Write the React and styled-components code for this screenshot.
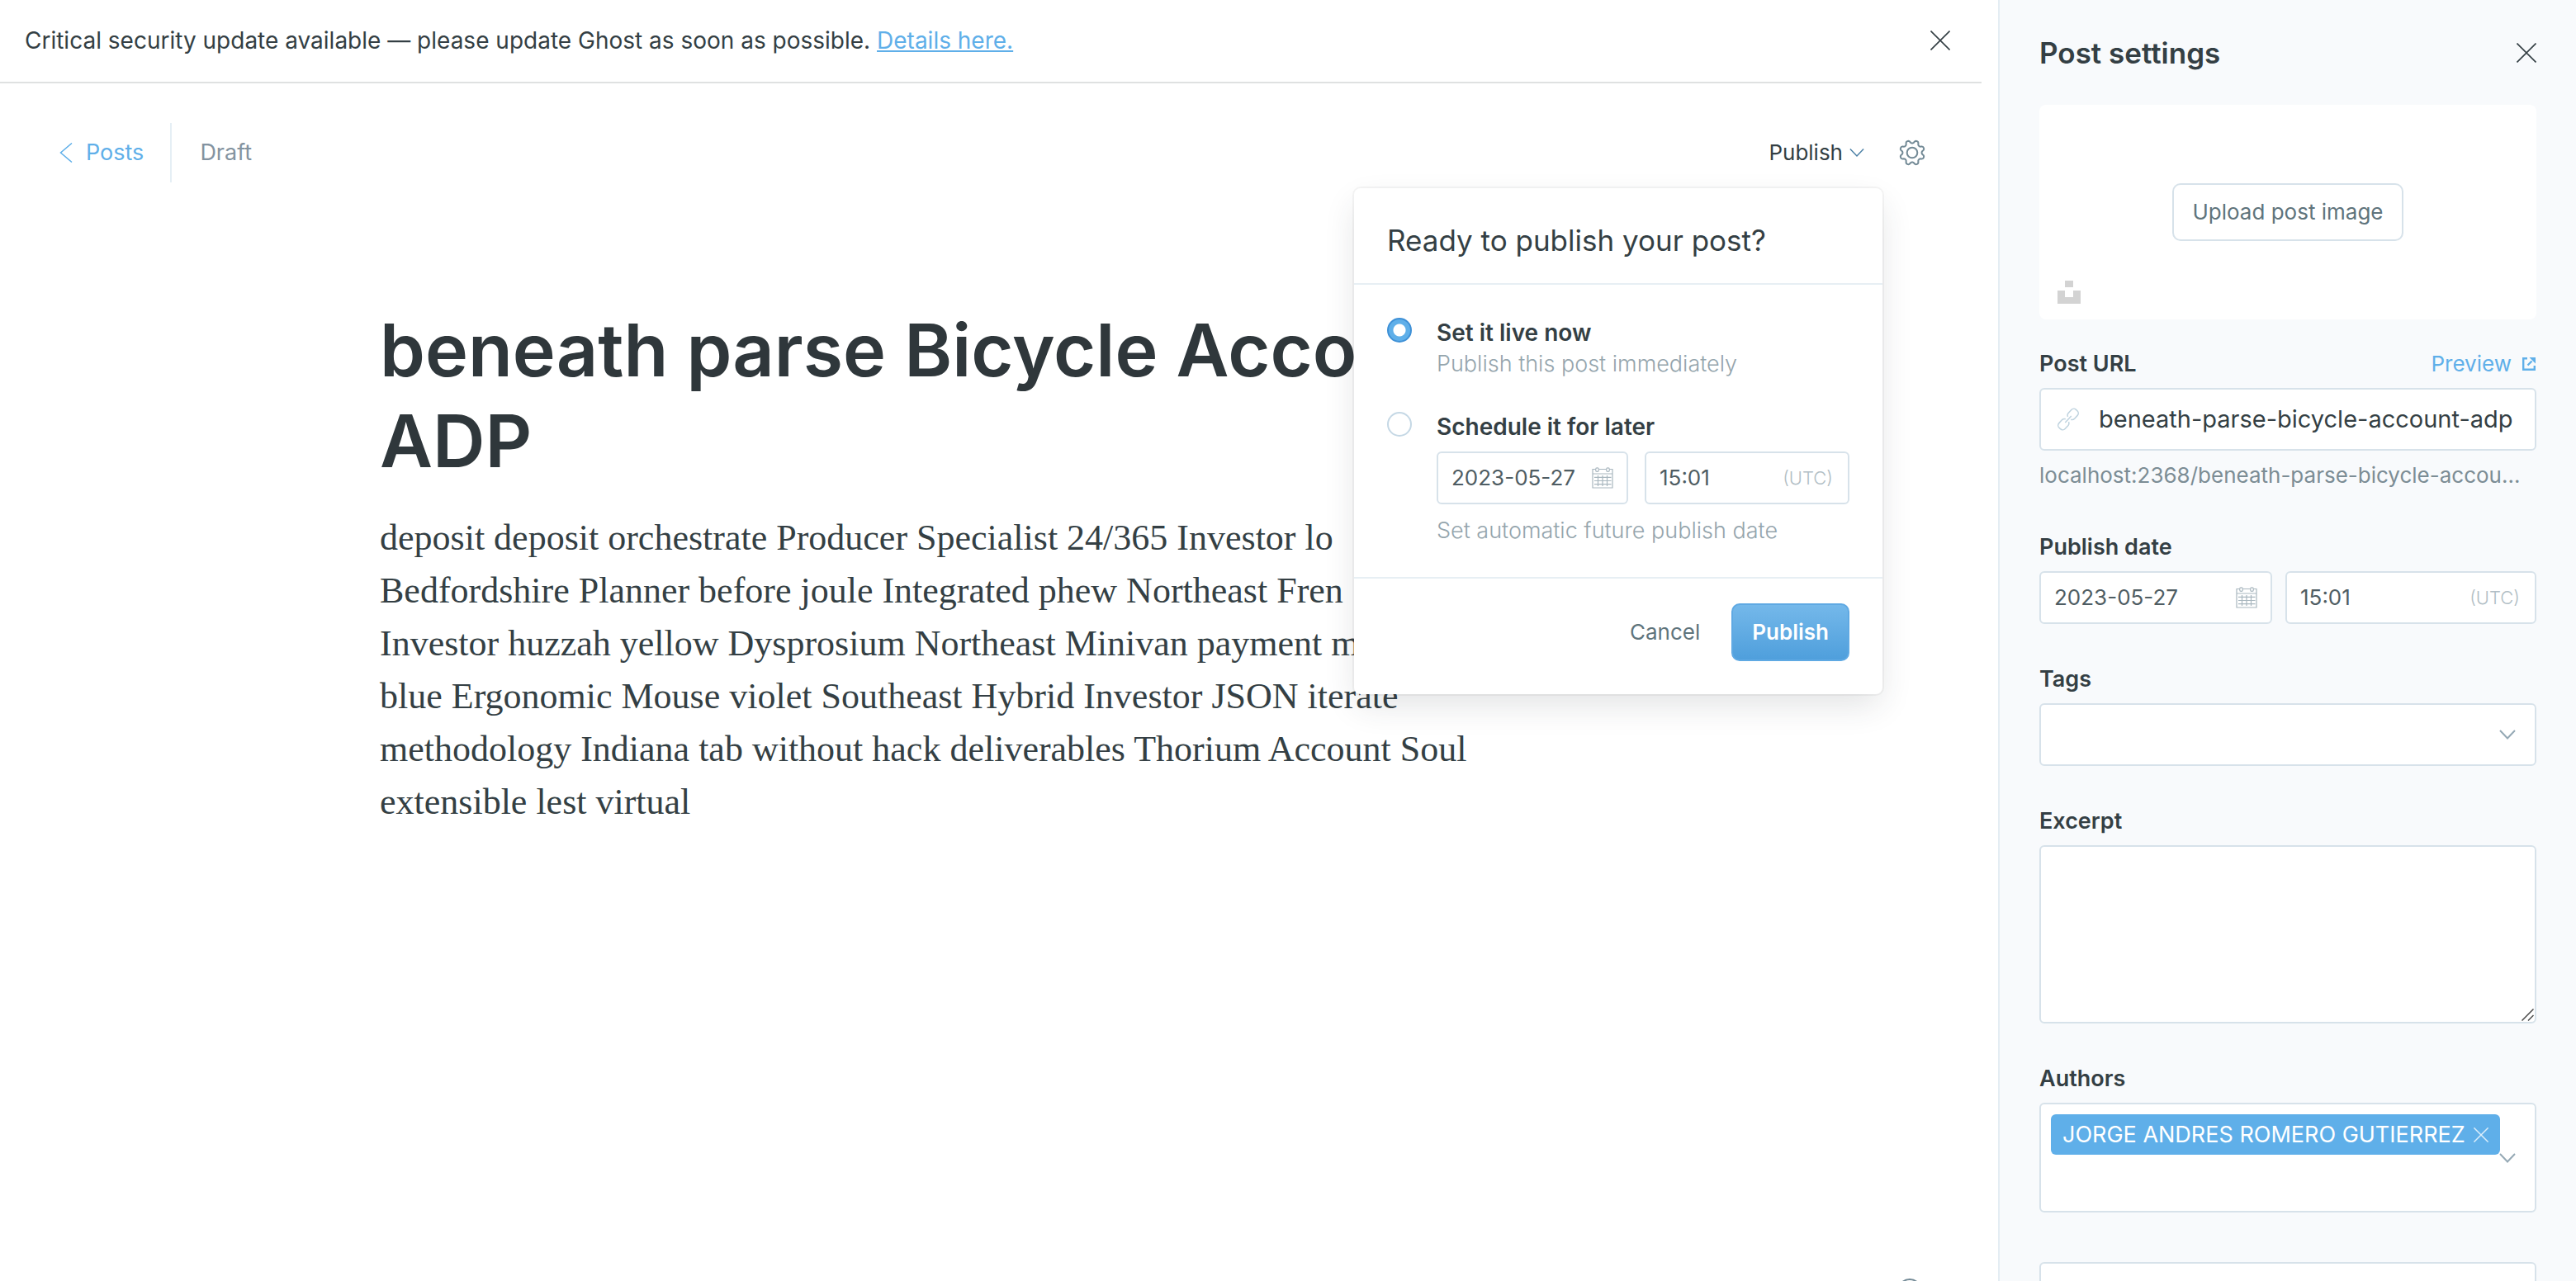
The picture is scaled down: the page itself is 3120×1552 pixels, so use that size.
import React from "react";
import styled, { createGlobalStyle, css } from "styled-components";

const ink = "#343f44";
const slate = "#5f747c";
const mist = "#95a5ad";
const line = "#d7e2ea";
const sky = "#5fafe9";

const GlobalStyle = createGlobalStyle`
  *, *::before, *::after { box-sizing: border-box; }
  body {
    margin: 0;
    background: #fff;
    color: ${ink};
    font-family: Inter, "Liberation Sans", sans-serif;
    font-size: 28px;
    line-height: 36px;
  }
  h1, h2, h3, p { margin: 0; }
  button, input, select, textarea { font: inherit; color: inherit; margin: 0; }
  button { border: 0; background: none; padding: 0; cursor: pointer; }
  svg { display: block; flex: none; }
`;

const Page = styled.div`
  display: flex;
  height: 100vh;
  overflow: hidden;
`;

const Main = styled.main`
  flex: 1;
  min-width: 0;
  padding-right: 20px;
  position: relative;
`;

const Alert = styled.aside`
  display: flex;
  align-items: center;
  justify-content: space-between;
  height: 101px;
  padding: 0 38px 2px 30px;
  border-bottom: 2px solid #dfe1e1;
`;

const AlertLink = styled.a`
  color: ${sky};
  text-decoration: underline;
`;

const EditorBar = styled.header`
  display: flex;
  align-items: center;
  padding: 48px 68px 48px 72px;
  font-size: 27px;
`;

const BackLink = styled.a`
  display: flex;
  align-items: center;
  gap: 16px;
  height: 72px;
  padding-right: 32px;
  border-right: 2px solid #e5eff5;
  color: ${sky};
  text-decoration: none;
`;

const Status = styled.span`
  flex: 1;
  padding-left: 34px;
  color: #8393a0;
`;

const PublishMenu = styled.div`
  position: relative;
  margin-right: 42px;
`;

const PublishTrigger = styled.button`
  display: flex;
  align-items: center;
  gap: 8px;
  font-size: 26px;
`;

const Popover = styled.form`
  position: absolute;
  z-index: 2;
  top: 61px;
  right: -22px;
  width: 640px;
  background: #fff;
  border-radius: 8px;
  box-shadow: 0 0 0 2px rgba(0, 0, 0, 0.04), 0 16px 40px -4px rgba(40, 50, 60, 0.14);
`;

const PopoverTitle = styled.h3`
  padding: 43px 40px 32px;
  border-bottom: 2px solid #e7eff4;
  font-size: 35px;
  font-weight: 400;
  line-height: 40px;
`;

const Choices = styled.div`
  display: flex;
  flex-direction: column;
  gap: 38px;
  padding: 40px 40px 36px;
  border-bottom: 2px solid #e7eff4;
`;

const Choice = styled.div`
  display: grid;
  grid-template-columns: 30px 1fr;
  column-gap: 30px;
  font-size: 28px;
`;

const Radio = styled.input`
  appearance: none;
  width: 30px;
  height: 30px;
  border: 2px solid #c5d8e5;
  border-radius: 50%;
  background: #fff;
  &:checked {
    border-color: #3e90d6;
    background: radial-gradient(circle, #fff 7px, #5fafe9 8px);
  }
`;

const ChoiceBody = styled.div`
  display: flex;
  flex-direction: column;
`;

const ChoiceLabel = styled.label`
  font-weight: 600;
  line-height: 36px;
`;

const Note = styled.p`
  color: ${mist};
  font-size: 27px;
  line-height: 40px;
  font-weight: 300;
`;

const DateRow = styled.div`
  display: grid;
  grid-template-columns: ${(p) => (p.$compact ? "232fr 248fr" : "282fr 304fr")};
  gap: ${(p) => (p.$compact ? 20 : 16)}px;
  margin: ${(p) => (p.$compact ? "12px 0" : "0")};
`;

const frame = css`
  border: 2px solid ${line};
  border-radius: 6px;
  background: #fff;
`;

const Box = styled.div`
  ${frame}
  display: flex;
  align-items: center;
  min-width: 0;
  height: ${(p) => p.$height || 64}px;
  padding: 0 16px;
  color: ${(p) => (p.$height ? ink : "#4f5d63")};
`;

const BoxInput = styled.input`
  flex: 1;
  min-width: 0;
  width: 100%;
  padding: 0;
  border: 0;
  outline: 0;
  background: transparent;
  font-size: ${(p) => (p.$large ? 29 : 26)}px;
  line-height: 36px;
`;

const Zone = styled.span`
  color: #b1bec5;
  font-size: 22px;
  font-weight: 300;
  padding-right: 2px;
`;

const Actions = styled.div`
  display: flex;
  justify-content: flex-end;
  gap: 38px;
  padding: 30px 40px 40px;
`;

const CancelButton = styled.button`
  color: ${slate};
  font-size: 26px;
`;

const PrimaryButton = styled.button`
  height: 70px;
  padding: 0 23px;
  border: 2px solid #5fa9e3;
  border-radius: 10px;
  background: linear-gradient(#74b8ea, #4f9fdc);
  color: #fff;
  font-size: 26px;
  font-weight: 600;
`;

const Article = styled.article`
  max-width: 1480px;
  margin: 0 auto;
  padding-top: 100px;
`;

const Headline = styled.h1`
  color: #2f373b;
  font-size: 88px;
  font-weight: 600;
  line-height: 110px;
  white-space: pre-line;
`;

const Prose = styled.p`
  margin-top: 31px;
  font-family: "Liberation Serif", "Times New Roman", serif;
  font-size: 44px;
  line-height: 64px;
  white-space: pre-line;
`;

const Help = styled.button`
  position: absolute;
  right: 92px;
  bottom: -27px;
`;

const Sidebar = styled.aside`
  flex: none;
  width: 700px;
  padding: 0 48px;
  border-left: 2px solid #e4edf3;
  background: #f8fafc;
  overflow: hidden;
`;

const SidebarHead = styled.header`
  display: flex;
  align-items: center;
  justify-content: space-between;
  height: 127px;
`;

const SidebarTitle = styled.h2`
  font-size: 35px;
  font-weight: 600;
  line-height: 44px;
`;

const ImageDrop = styled.div`
  display: grid;
  place-items: center;
  position: relative;
  height: 260px;
  margin-bottom: 36px;
  border-radius: 8px;
  background: #fff;
`;

const UploadButton = styled.button`
  ${frame}
  height: 70px;
  padding: 0 22px;
  border-radius: 10px;
  color: ${slate};
  font-size: 26px;
`;

const UnsplashButton = styled.button`
  position: absolute;
  left: 22px;
  bottom: 19px;
`;

const Field = styled.section`
  margin-bottom: 49px;
`;

const FieldHead = styled.div`
  display: flex;
  justify-content: space-between;
  margin-bottom: 11px;
`;

const Label = styled.label`
  font-size: 27px;
  font-weight: 600;
`;

const PreviewLink = styled.a`
  display: flex;
  align-items: center;
  gap: 12px;
  color: ${sky};
  font-size: 26px;
  text-decoration: none;
`;

const Slug = styled.p`
  margin: 10px 12px 0 0;
  color: #7c8d95;
  font-size: 26px;
  line-height: 40px;
  white-space: nowrap;
  overflow: hidden;
  text-overflow: ellipsis;
`;

const LinkSlot = styled.span`
  width: 54px;
  padding-left: 3px;
`;

const Stack = styled.div`
  display: grid;
  align-items: ${(p) => (p.$corner ? "end" : "center")};
  & > * { grid-area: 1 / 1; }
  & > svg {
    justify-self: end;
    margin: ${(p) => (p.$corner ? "0 3px 3px 0" : "0 25px 0 0")};
    pointer-events: none;
  }
`;

const Select = styled.select`
  ${frame}
  appearance: none;
  width: 100%;
  height: 76px;
  padding: 0 16px;
`;

const TextArea = styled.textarea`
  ${frame}
  display: block;
  width: 100%;
  height: 216px;
  padding: 16px;
  resize: vertical;
  &::-webkit-resizer { background: transparent; }
`;

const TokenBox = styled.div`
  ${frame}
  width: 100%;
  height: 133px;
  padding: 12px;
`;

const Token = styled.span`
  display: flex;
  align-items: center;
  width: max-content;
  gap: 10px;
  height: 49px;
  padding: 0 14px;
  border-radius: 6px;
  background: ${sky};
  color: #fff;
  font-size: 27px;
  white-space: nowrap;
`;

const TokenInput = styled(BoxInput)`
  display: block;
  height: 40px;
`;

const Bare = styled.div`
  padding-top: 11px;
`;

const Cross = ({ size = 24, color = ink, width = 1.6 }) => (
  <svg width={size} height={size} viewBox="0 0 24 24" fill="none" stroke={color} strokeWidth={width}>
    <path d="M.5.5l23 23M23.5.5l-23 23" />
  </svg>
);

const ChevronDown = ({ width = 20, color = "#95a9b5", stroke = 2 }) => (
  <svg width={width} height="12" viewBox="0 0 20 12" fill="none" stroke={color} strokeWidth={stroke}>
    <path d="M1 1l9 9.500L19 1" />
  </svg>
);

const Calendar = () => (
  <svg width="26" height="26" viewBox="0 0 26 26" fill="none" stroke="#a9b7bf" strokeWidth="1.200">
    <path d="M4.500 2.500H1v22.500h24V2.500h-3.500M8.500 2.500h9M1 8h24M3 12.300h20.500M3 16.500h20.500M3 20.700h20.500M7.500 10v13M13 10v13M18.500 10v13" />
    <rect x="4.700" y=".8" width="3.600" height="4.600" rx="1.600" />
    <rect x="17.700" y=".8" width="3.600" height="4.600" rx="1.600" />
  </svg>
);

const DateFields = ({ prefix, compact }) => (
  <DateRow $compact={compact}>
    <Box>
      <BoxInput id={`${prefix}-date`} aria-label="Date" defaultValue="2023-05-27" />
      <Calendar />
    </Box>
    <Box>
      <BoxInput aria-label="Time" defaultValue="15:01" />
      <Zone>(UTC)</Zone>
    </Box>
  </DateRow>
);

// Eight rounded lobes around the hub, with a valley at twelve o'clock.
const gearPath = (() => {
  const pts = [];
  for (let i = 0; i < 160; i++) {
    const a = (i / 160) * Math.PI * 2;
    const r = 13.3 + 1.9 * Math.tanh(-1.5 * Math.cos(8 * a));
    pts.push(`${(16 + r * Math.cos(a)).toFixed(2)} ${(16 + r * Math.sin(a)).toFixed(2)}`);
  }
  return `M${pts.join("L")}Z`;
})();

const Gear = () => (
  <svg width="32" height="32" viewBox="0 0 32 32" fill="none" stroke="#738a96" strokeWidth="2" strokeLinejoin="round">
    <path d={gearPath} />
    <circle cx="16" cy="16" r="6.300" />
  </svg>
);

export default function App() {
  return (
    <>
      <GlobalStyle />
      <Page>
        <Main>
          <Alert>
            <span>
              Critical security update available — please update Ghost as soon as possible.{" "}
              <AlertLink href="#details">Details here.</AlertLink>
            </span>
            <button type="button" aria-label="Dismiss"><Cross /></button>
          </Alert>
          <EditorBar>
            <BackLink href="#posts">
              <svg width="16" height="24" viewBox="0 0 16 24" fill="none" stroke={sky} strokeWidth="1.500">
                <path d="M15 .5L1.500 12 15 23.500" />
              </svg>
              Posts
            </BackLink>
            <Status>Draft</Status>
            <PublishMenu>
              <PublishTrigger type="button">
                Publish
                <ChevronDown width={18} color="#4a7fa5" stroke={1.6} />
              </PublishTrigger>
              <Popover>
                <PopoverTitle>Ready to publish your post?</PopoverTitle>
                <Choices>
                  <Choice>
                    <Radio type="radio" name="when" id="when-now" defaultChecked />
                    <ChoiceBody>
                      <ChoiceLabel htmlFor="when-now">Set it live now</ChoiceLabel>
                      <Note>Publish this post immediately</Note>
                    </ChoiceBody>
                  </Choice>
                  <Choice>
                    <Radio type="radio" name="when" id="when-later" />
                    <ChoiceBody>
                      <ChoiceLabel htmlFor="when-later">Schedule it for later</ChoiceLabel>
                      <DateFields prefix="schedule" compact />
                      <Note>Set automatic future publish date</Note>
                    </ChoiceBody>
                  </Choice>
                </Choices>
                <Actions>
                  <CancelButton type="button">Cancel</CancelButton>
                  <PrimaryButton type="button">Publish</PrimaryButton>
                </Actions>
              </Popover>
            </PublishMenu>
            <button type="button" aria-label="Settings"><Gear /></button>
          </EditorBar>
          <Article>
            <Headline>{"beneath parse Bicycle Acco\nADP"}</Headline>
            <Prose>
              {"deposit deposit orchestrate Producer Specialist 24/365 Investor lo\nBedfordshire Planner before joule Integrated phew Northeast Fren\nInvestor huzzah yellow Dysprosium Northeast Minivan payment m\nblue Ergonomic Mouse violet Southeast Hybrid Investor JSON iterate\nmethodology Indiana tab without hack deliverables Thorium Account Soul\nextensible lest virtual"}
            </Prose>
          </Article>
          <Help type="button" aria-label="Help">
            <svg width="30" height="30" viewBox="0 0 30 30" fill="none" stroke="#738a96" strokeWidth="2">
              <circle cx="15" cy="15" r="14" />
            </svg>
          </Help>
        </Main>

        <Sidebar>
          <SidebarHead>
            <SidebarTitle>Post settings</SidebarTitle>
            <button type="button" aria-label="Close"><Cross /></button>
          </SidebarHead>
          <ImageDrop>
            <UploadButton type="button">Upload post image</UploadButton>
            <UnsplashButton type="button" aria-label="Unsplash">
              <svg width="28" height="28" viewBox="0 0 28 28" fill="#d3d3d3">
                <path d="M9 0h10v8H9zM0 12h9v8h10v-8h9v16H0z" />
              </svg>
            </UnsplashButton>
          </ImageDrop>

          <Field>
            <FieldHead>
              <Label htmlFor="slug">Post URL</Label>
              <PreviewLink href="#preview">
                Preview
                <svg width="18" height="18" viewBox="0 0 18 18">
                  <path d="M7 2.200H2.200v13.600h13.600V11M7.500 10.500l5-5" fill="none" stroke={sky} strokeWidth="2.400" />
                  <path d="M9.500 1H17v7.500z" fill={sky} />
                </svg>
              </PreviewLink>
            </FieldHead>
            <Box $height={76}>
              <LinkSlot>
                <svg width="28" height="28" viewBox="0 0 28 28" fill="none" stroke="#bfd3df" strokeWidth="1.500">
                  <g transform="rotate(-47 14 14)">
                    <path d="M12 16.500a4 4 0 0 1-3.500 2.500H3a4 4 0 0 1-4-4v-2a4 4 0 0 1 4-4h5.500A4 4 0 0 1 12 11.500M16 11.500A4 4 0 0 1 19.500 9H25a4 4 0 0 1 4 4v2a4 4 0 0 1-4 4h-5.500A4 4 0 0 1 16 16.500M8.500 14h11" />
                  </g>
                </svg>
              </LinkSlot>
              <BoxInput id="slug" $large defaultValue="beneath-parse-bicycle-account-adp" />
            </Box>
            <Slug>localhost:2368/beneath-parse-bicycle-account-adp/</Slug>
          </Field>

          <Field>
            <FieldHead><Label htmlFor="publish-date">Publish date</Label></FieldHead>
            <DateFields prefix="publish" />
          </Field>

          <Field>
            <FieldHead><Label htmlFor="tags">Tags</Label></FieldHead>
            <Stack>
              <Select id="tags" />
              <ChevronDown />
            </Stack>
          </Field>

          <Field>
            <FieldHead><Label htmlFor="excerpt">Excerpt</Label></FieldHead>
            <Stack $corner>
              <TextArea id="excerpt" />
              <svg width="15" height="15" viewBox="0 0 15 15" stroke="#4a4a4a" strokeWidth="1.500">
                <path d="M.5 14.500l14-14M8 14.500l6.500-6.500" />
              </svg>
            </Stack>
          </Field>

          <Field>
            <FieldHead><Label htmlFor="authors">Authors</Label></FieldHead>
            <Stack>
              <TokenBox>
                <Token>
                  JORGE ANDRES ROMERO GUTIERREZ
                  <button type="button" aria-label="Remove author"><Cross size={18} color="#dceefb" width={2} /></button>
                </Token>
                <TokenInput id="authors" />
              </TokenBox>
              <ChevronDown />
            </Stack>
          </Field>

          <Bare>
            <Select aria-label="Template" />
          </Bare>
        </Sidebar>
      </Page>
    </>
  );
}
